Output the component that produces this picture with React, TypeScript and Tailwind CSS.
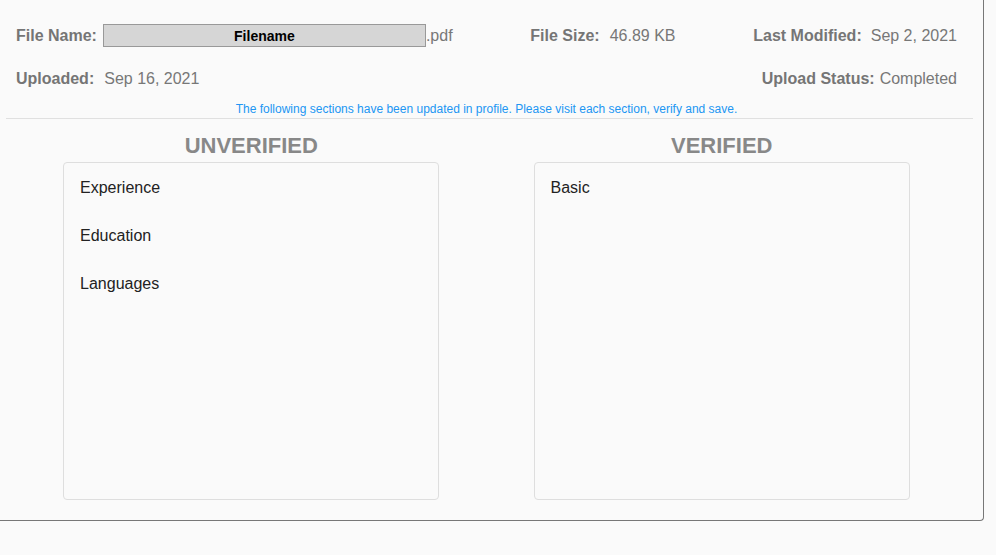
import React from "react";

const UNVERIFIED = ["Experience", "Education", "Languages"];
const VERIFIED = ["Basic"];

function Field({ label, value, gap = "ml-[10px]" }: { label: string; value: React.ReactNode; gap?: string }) {
  return (
    <div className="flex items-center h-[24px] text-[16px] text-[#777]">
      <span className="font-bold text-[#757575]">{label}</span>
      <span className={gap}>{value}</span>
    </div>
  );
}

function SectionColumn({ title, items }: { title: string; items: string[] }) {
  return (
    <div className="flex flex-col items-center">
      <h2 className="text-[22px] leading-[26px] pt-px font-bold text-[#888]">{title}</h2>
      <div className="mt-[3px] w-[80%] h-[338px] border border-[#dedede] rounded-[4px] bg-[#fafafa] pt-px">
        {items.map((item) => (
          <div key={item} className="h-[48px] flex items-center pl-[16px] text-[16px] text-[#222]">
            {item}
          </div>
        ))}
      </div>
    </div>
  );
}

export default function App() {
  return (
    <div className="min-h-screen w-full bg-[#fafafa]" style={{ fontFamily: '"Liberation Sans", Arial, sans-serif' }}>
      <div className="w-[984px] h-[521px] border-r border-b border-[#777] rounded-br-[4px] pl-[16px] pr-[26px] pt-[24px]">
        {/* File info */}
        <div className="flex justify-between">
          <div className="flex items-center h-[24px] text-[16px] text-[#777]">
            <span className="font-bold text-[#757575]">File Name:</span>
            <span className="ml-[6px] -mt-px w-[323px] h-[23px] bg-[#d6d6d6] border border-[#999] flex items-center justify-center text-[14px] font-bold text-black pt-[2px]">
              Filename
            </span>
            <span>.pdf</span>
          </div>
          <Field label="File Size:" value="46.89 KB" />
          <Field label="Last Modified:" value="Sep 2, 2021" gap="ml-[9px]" />
        </div>
        <div className="mt-[19px] flex justify-between">
          <Field label="Uploaded:" value="Sep 16, 2021" />
          <Field label="Upload Status:" value="Completed" gap="ml-[5px]" />
        </div>

        <p className="mt-[11px] text-center text-[12px] leading-[14px] text-[#2196f3]">
          The following sections have been updated in profile. Please visit each section, verify and save.
        </p>
        <div className="mt-[2px] ml-[-10px] mr-[-16px] border-t border-[#e0e0e0]" />

        {/* Sections */}
        <div className="mt-[13px] grid grid-cols-2">
          <SectionColumn title="UNVERIFIED" items={UNVERIFIED} />
          <SectionColumn title="VERIFIED" items={VERIFIED} />
        </div>
      </div>
    </div>
  );
}
